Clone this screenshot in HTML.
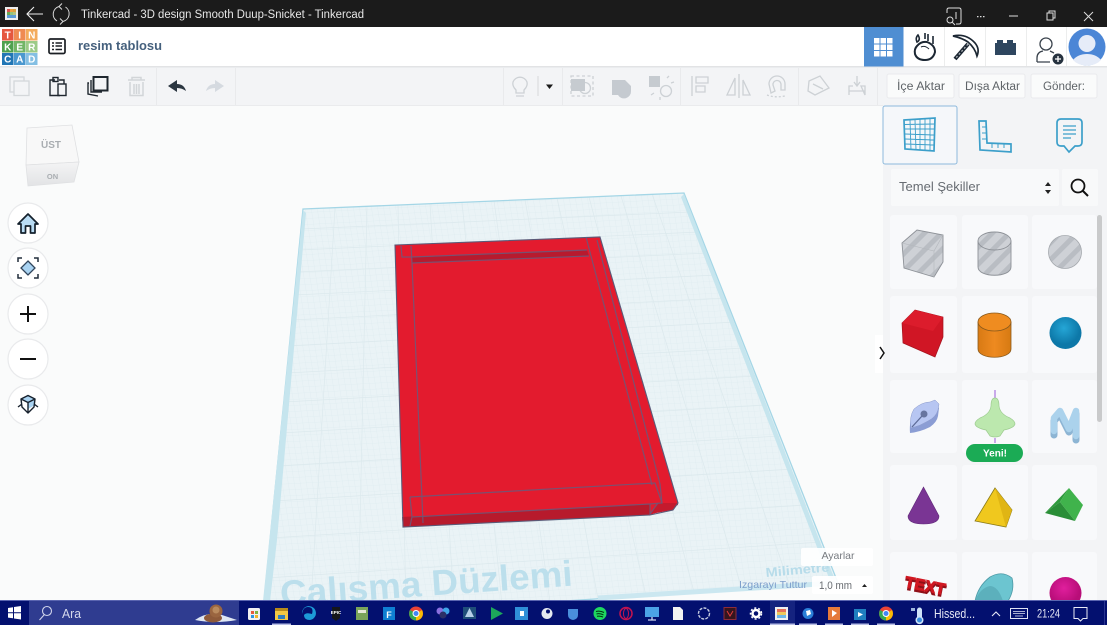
<!DOCTYPE html>
<html lang="tr"><head><meta charset="utf-8"><title>Tinkercad</title>
<style>html,body{margin:0;padding:0;background:#fafbfb;width:1107px;height:625px;overflow:hidden}svg{display:block;position:absolute;left:0;top:0}text{font-family:"Liberation Sans",sans-serif}</style></head>
<body>
<svg width="1107" height="625" viewBox="0 0 1107 625" xmlns="http://www.w3.org/2000/svg">
<defs>
<pattern id="fine" width="6" height="6" patternUnits="userSpaceOnUse" patternTransform="rotate(-3) skewX(6)"><path d="M6 0H0V6" fill="none" stroke="#d5e6eb" stroke-width=".4"/></pattern>
<pattern id="st" width="12" height="12" patternUnits="userSpaceOnUse" patternTransform="rotate(45)"><rect width="12" height="12" fill="#ced1d6"/><rect width="5" height="12" fill="#b9bdc3"/></pattern>
<linearGradient id="cyl" x1="0" x2="1"><stop offset="0" stop-color="#d87a14"/><stop offset=".5" stop-color="#ee8a20"/><stop offset="1" stop-color="#d67a12"/></linearGradient>
<linearGradient id="cube" x1="0" x2="0" y1="0" y2="1"><stop offset="0" stop-color="#f4f4f5"/><stop offset="1" stop-color="#e2e3e5"/></linearGradient>
<radialGradient id="blue" cx=".45" cy=".35"><stop offset="0" stop-color="#25a6d6"/><stop offset="1" stop-color="#0d78a8"/></radialGradient>
<radialGradient id="pink" cx=".45" cy=".35"><stop offset="0" stop-color="#e01f9d"/><stop offset="1" stop-color="#b80d78"/></radialGradient>
</defs>

<!-- work plane -->
<rect width="1107" height="625" fill="#fafbfb"/>
<polygon points="303,209 684,193 838,583 262,621" fill="#eaf3f6"/>
<polygon points="303,209 684,193 838,583 262,621" fill="url(#fine)"/>
<path d="M335 208L310 618M367 206L358 615M398 205L406 611M430 204L454 608M462 202L502 605M494 201L550 602M525 200L598 599M557 198L646 596M589 197L694 592M621 196L742 589M652 194L790 586M301 229L691 212M299 250L699 232M297 272L708 253M294 295L716 275M292 320L725 298M289 346L735 322M287 373L745 348M284 402L756 376M281 433L768 405M277 466L780 436M274 501L793 469M270 538L807 505M266 578L822 542" stroke="#dce9ed" stroke-width=".7" fill="none"/>
<polygon points="303,209 684,193 838,583 262,621" fill="none" stroke="#a4d6e6" stroke-width="1.300"/>
<polygon points="303,210 306,213 277,540 270,601 263,601" fill="#c6e5ee"/>
<polygon points="684,194 681,197 829,578 835,580" fill="#c6e5ee"/>
<path d="M598 598L835 583" stroke="#cbe7f0" stroke-width="5"/>
<text x="0" y="0" transform="translate(281,606) rotate(-4)" font-size="36" font-weight="700" fill="#bcdfec" textLength="293" lengthAdjust="spacingAndGlyphs">Çalışma Düzlemi</text>
<text transform="translate(766,577) rotate(-5)" font-size="13" font-weight="700" fill="#b7dcea" textLength="64" lengthAdjust="spacingAndGlyphs">Milimetre</text>

<!-- red box -->
<polygon points="395,245 600,237 678,503 678,505 650,515 403,527" fill="#e31b2e"/>
<polygon points="402,517 650,504 650,515 403,527" fill="#b71a2c"/>
<polygon points="650,514 658,503 678,503 673,510" fill="#c41a2d"/>
<polygon points="412,257 587,250 589,256 412,263" fill="#b81a2e"/>
<path d="M395 245L600 237L678 503L673 510L650 515L403 527L395 245Z" fill="none" stroke="#5b5a78" stroke-width="1.100"/>
<g fill="none" stroke="#6a5a7c" stroke-width="1.200" opacity=".85">
<path d="M412 257L587 250M412 263L589 256M401 246L402 257L412 257M411 246L412 263L423 523"/>
<path d="M586 237L591 256L652 485M597 240L660 484L662 503"/>
<path d="M410 497L655 483L662 503L650 504L412 517L410 526M410 497L412 517"/>
<path d="M650 504V514L658 503"/>
</g>

<!-- left controls -->
<polygon points="27,128 72,125 79,162 26,165" fill="#f8f8f8" stroke="#dfe0e2" stroke-width=".8"/>
<polygon points="26,165 79,162 74,182 28,186" fill="url(#cube)" stroke="#dfe0e2" stroke-width=".8"/>
<text x="51" y="148" font-size="10" font-weight="700" fill="#a9adb1" text-anchor="middle">ÜST</text>
<text x="52.500" y="179" font-size="7.500" font-weight="700" fill="#a9adb1" text-anchor="middle">ON</text>
<g fill="#fff" stroke="#e9eaec" stroke-width="1.200"><circle cx="28" cy="223" r="20"/><circle cx="28" cy="268" r="20"/><circle cx="28" cy="314" r="20"/><circle cx="28" cy="359" r="20"/><circle cx="28" cy="405" r="20"/></g>
<path d="M18 224L28 214L38 224H35V233H30.500V226H25.500V233H21V224Z" fill="#b9dcf4" stroke="#14202c" stroke-width="1.700" stroke-linejoin="round"/>
<path d="M28 261L35 268L28 275L21 268Z" fill="#a9d3f2" stroke="#31465c" stroke-width="1.300"/>
<path d="M18 262V258H22M34 258H38V262M38 274V278H34M22 278H18V274" fill="none" stroke="#222e3c" stroke-width="1.500"/>
<path d="M20 314H36M28 306V322" stroke="#111" stroke-width="2"/><path d="M20 359H36" stroke="#111" stroke-width="2"/>
<path d="M28 409V402L35 398.500V405ZM28 402L21 398.500L28 395L35 398.500Z" fill="#a9d3f2"/>
<path d="M21 399L28 395.500L35 399L34 407L28 413L22 407ZM21 399L28 402.500L35 399M28 402.500V413M18 407L22 404M38 407L34 404" fill="none" stroke="#18222e" stroke-width="1.400" stroke-linejoin="round"/>

<!-- right panel -->
<rect x="883" y="105" width="224" height="496" fill="#f3f4f6"/>
<rect x="883" y="106" width="74" height="58" rx="2" fill="#f5f7fa" stroke="#8db9dc"/>
<g fill="none" stroke="#3c9fca" stroke-width="1.700">
<path d="M904 120L935 118L934 151L905 149Z"/>
<path d="M904 124.500L935 124M904 129L935 129M905 134L934 135M905 139L934 140M905 144L934 145M910 120L911 150M915 120L916 150M920 119V150M925 119V151M930 119V151" stroke-width=".9"/>
<path d="M979 121H986L987 143L1011 144V152L980 150Z"/><path d="M986 127H982M986 133H982M986 139H982M992 144V148M998 144V148M1004 144V148" stroke-width="1"/>
<path d="M1061 119H1078Q1082 119 1082 123V142Q1082 146 1078 146H1075L1069 152L1064 146H1061Q1057 146 1057 142V123Q1057 119 1061 119Z"/>
<path d="M1063 126H1076M1063 130H1076M1063 134H1076M1063 138H1071" stroke-width="1.200"/>
</g>
<rect x="891" y="169" width="168" height="37" rx="2" fill="#f8f9fa"/><rect x="1062" y="169" width="36" height="37" rx="2" fill="#f8f9fa"/>
<text x="899" y="191" font-size="12.500" fill="#676c72" textLength="81" lengthAdjust="spacingAndGlyphs">Temel Şekiller</text>
<path d="M1045 186L1048 182L1051 186ZM1045 190L1048 194L1051 190Z" fill="#222"/>
<circle cx="1078" cy="186" r="6.500" fill="none" stroke="#111" stroke-width="1.800"/><path d="M1083 191L1088 196" stroke="#111" stroke-width="2"/>
<g fill="#f8f9fb">
<rect x="890" y="215" width="67" height="74" rx="3"/><rect x="962" y="215" width="66" height="74" rx="3"/><rect x="1032" y="215" width="65" height="74" rx="3"/>
<rect x="890" y="296" width="67" height="77" rx="3"/><rect x="962" y="296" width="66" height="77" rx="3"/><rect x="1032" y="296" width="65" height="77" rx="3"/>
<rect x="890" y="380" width="67" height="73" rx="3"/><rect x="962" y="380" width="66" height="73" rx="3"/><rect x="1032" y="380" width="65" height="73" rx="3"/>
<rect x="890" y="465" width="67" height="75" rx="3"/><rect x="962" y="465" width="66" height="75" rx="3"/><rect x="1032" y="465" width="65" height="75" rx="3"/>
<rect x="890" y="552" width="67" height="60" rx="3"/><rect x="962" y="552" width="66" height="60" rx="3"/><rect x="1032" y="552" width="65" height="60" rx="3"/>
</g>
<rect x="1097" y="215" width="5" height="207" rx="2.500" fill="#c9cacb"/>
<!-- shapes -->
<polygon points="902,243 917,230 943,235 943,262 934,277 904,268" fill="url(#st)" stroke="#8e9298" stroke-width=".9"/>
<path d="M902 243L934 251L943 235M934 251V277" fill="none" stroke="#b3b7bc" stroke-width=".6"/>
<path d="M978 241V267C978 278 1011 278 1011 267V241Z" fill="url(#st)" stroke="#8e9298" stroke-width=".9"/><ellipse cx="994.500" cy="241" rx="16.500" ry="9" fill="url(#st)" stroke="#8e9298" stroke-width=".9"/>
<circle cx="1065" cy="252" r="16.500" fill="url(#st)" stroke="#a5a9ae" stroke-width=".8"/>
<polygon points="902,323 915,310 943,317 943,337 935,357 903,343" fill="#d01625" stroke="#a5141f" stroke-width=".7"/><polygon points="902,323 915,310 943,317 933,331" fill="#dc1c2c"/>
<path d="M978 322V349C978 360 1011 360 1011 349V322Z" fill="url(#cyl)" stroke="#8a5a1c" stroke-width=".8"/><ellipse cx="994.500" cy="322" rx="16.500" ry="9" fill="#ef8c20" stroke="#8a5a1c" stroke-width=".8"/>
<circle cx="1065.500" cy="333" r="16" fill="url(#blue)"/>
<path d="M910 433Q909 420 914 412Q922 405 930 405L935 403L939 408L938 416Q937 422 930 427Q920 432 910 433Z" fill="#8b9dd4"/>
<path d="M911 428Q909 417 914 409Q922 402 930 402L935 400L939 404L938 410Q936 417 928 421Q920 426 911 428Z" fill="#b7c6f2" stroke="#8c9bcb" stroke-width=".5"/><path d="M912 427L922 416" stroke="#5c6a96" stroke-width="1.300"/><circle cx="924" cy="414" r="3.500" fill="#67759f"/>
<path d="M995 390V398" stroke="#c9a9ea" stroke-width="2"/><path d="M995 398Q991 398 991 406Q990 414 980 418Q975 421 975 424Q976 428 986 430L990 436Q995 438 1000 436L1004 430Q1014 428 1015 424Q1015 421 1010 418Q1000 414 999 406Q999 398 995 398Z" fill="#bce8ae" stroke="#9dcc90" stroke-width=".7"/><path d="M995 438V443" stroke="#c9a9ea" stroke-width="2"/>
<rect x="966" y="444" width="57" height="18" rx="9" fill="#1bab55"/><text x="995" y="456.500" font-size="10" font-weight="700" fill="#fff" text-anchor="middle">Yeni!</text>
<path d="M1054 435V421L1060 414L1069 432L1076 414V440" fill="none" stroke="#8db5d4" stroke-width="7" stroke-linejoin="round" stroke-linecap="round"/>
<path d="M1054 431V418L1060 411L1069 429L1076 411V436" fill="none" stroke="#abd2ec" stroke-width="6.500" stroke-linejoin="round" stroke-linecap="round"/>
<path d="M923.500 487L939 516Q939 524 923.500 524Q908 524 908 516Z" fill="#7a3594" stroke="#5f2878" stroke-width=".6"/>
<polygon points="995,488 975,521 1006,527 1012,510" fill="#f0c81e" stroke="#8a7a18" stroke-width=".8"/><polygon points="995,488 1006,527 1012,510" fill="#e0b514"/>
<polygon points="1069,488 1045,513 1060,502" fill="#2f9a3d"/><polygon points="1069,488 1083,505 1075,521 1060,502" fill="#40b34c"/><polygon points="1045,513 1060,502 1075,521" fill="#2a8e37"/>
<g font-size="16" font-weight="700" text-anchor="start"><text transform="translate(904,589) rotate(11)" fill="#8f1019" stroke="#8f1019" stroke-width="1.300" textLength="41" lengthAdjust="spacingAndGlyphs">TEXT</text><text transform="translate(904,587) rotate(11)" fill="#d01822" stroke="#d01822" stroke-width=".9" textLength="41" lengthAdjust="spacingAndGlyphs">TEXT</text></g>
<path d="M975 601Q978 586 990 577Q1002 570 1012 578Q1015 590 1008 601Z" fill="#6cc5d0" stroke="#4d99a5" stroke-width=".8"/><path d="M975 601Q980 588 990 586Q998 586 1003 601Z" fill="#5cb0bc"/>
<circle cx="1065.500" cy="593" r="16" fill="url(#pink)"/>
<rect x="875" y="335" width="8" height="38" fill="#fff"/><path d="M880 347L884 353L880 359" fill="none" stroke="#111" stroke-width="1.500"/>

<!-- settings -->
<rect x="801" y="548" width="72" height="18" rx="2" fill="#fff" opacity=".9"/><text x="838" y="559" font-size="10.500" fill="#777b80" text-anchor="middle">Ayarlar</text>
<text x="739" y="588" font-size="10.500" fill="#7d9ecb" textLength="68" lengthAdjust="spacingAndGlyphs">Izgarayı Tuttur</text>
<rect x="812" y="576" width="61" height="18" rx="2" fill="#fff" opacity=".92"/><text x="819" y="589" font-size="11" fill="#666a6f" textLength="33" lengthAdjust="spacingAndGlyphs">1,0 mm</text><path d="M862 587L864.500 584L867 587Z" fill="#222"/>

<!-- title bar -->
<rect width="1107" height="27" fill="#1b1b1b"/>
<rect x="5" y="7" width="13" height="13" fill="#eee"/><rect x="7" y="9" width="3" height="3" fill="#d9534f"/><rect x="10" y="9" width="3" height="3" fill="#f0a040"/><rect x="13" y="9" width="3" height="3" fill="#d9a040"/><rect x="7" y="12" width="3" height="3" fill="#6aa84f"/><rect x="10" y="12" width="3" height="3" fill="#93c47d"/><rect x="13" y="12" width="3" height="3" fill="#b6c47d"/><rect x="7" y="15" width="9" height="3" fill="#5b9bd5"/>
<path d="M43 14H27M34 7L27 14L34 21" fill="none" stroke="#eee" stroke-width="1.100"/>
<path d="M59 6.500A8 8 0 0 0 57 21M63 21.500A8 8 0 0 0 65.500 7M62 3.500L59 6.500L62 9.500M60 24.500L63 21.500L60 18.500" fill="none" stroke="#ddd" stroke-width="1"/>
<text x="81" y="18" font-size="11.500" fill="#e6e6e6" textLength="283" lengthAdjust="spacingAndGlyphs">Tinkercad - 3D design Smooth Duup-Snicket - Tinkercad</text>
<path d="M947 13V10Q947 8 949 8H959Q961 8 961 10V22Q961 24 959 24H956M956 12V19" fill="none" stroke="#ddd"/><circle cx="950" cy="20" r="3" fill="none" stroke="#ddd"/><path d="M952 22L955 25" stroke="#ddd"/>
<path d="M977 16h1.500v1.200h-1.500zM980 16h1.500v1.200h-1.500zM983 16h1.500v1.200h-1.500z" fill="#ddd"/>
<path d="M1009 16H1018" stroke="#ddd"/>
<rect x="1047" y="13" width="6" height="7" fill="none" stroke="#ddd"/><path d="M1049 13V11H1055V18H1053" fill="none" stroke="#ddd"/>
<path d="M1084 12L1093 21M1093 12L1084 21" stroke="#ddd"/>

<!-- header -->
<rect y="27" width="1107" height="40" fill="#fff"/><rect y="66" width="1107" height="1.500" fill="#e2e3e5"/>
<g font-size="10" font-weight="700" fill="#fff" text-anchor="middle">
<rect x="2" y="29" width="11.500" height="11.500" fill="#e5573f"/><text x="7.700" y="38.500">T</text>
<rect x="14" y="29" width="11.500" height="11.500" fill="#ef8a52"/><text x="19.700" y="38.500">I</text>
<rect x="26" y="29" width="11.500" height="11.500" fill="#f3ab5c"/><text x="31.700" y="38.500">N</text>
<rect x="2" y="41" width="11.500" height="11.500" fill="#4ea14f"/><text x="7.700" y="50.500">K</text>
<rect x="14" y="41" width="11.500" height="11.500" fill="#72b566"/><text x="19.700" y="50.500">E</text>
<rect x="26" y="41" width="11.500" height="11.500" fill="#9ccb87"/><text x="31.700" y="50.500">R</text>
<rect x="2" y="53" width="11.500" height="12" fill="#2176b5"/><text x="7.700" y="62.500">C</text>
<rect x="14" y="53" width="11.500" height="12" fill="#4b98cf"/><text x="19.700" y="62.500">A</text>
<rect x="26" y="53" width="11.500" height="12" fill="#84bfe3"/><text x="31.700" y="62.500">D</text>
</g>
<rect x="49" y="39" width="16" height="14.500" rx="1.500" fill="none" stroke="#1b1f24" stroke-width="1.700"/><path d="M52 43h2M52 46h2M52 49.500h2M55.500 43H62M55.500 46H62M55.500 49.500H62" stroke="#1b1f24" stroke-width="1.500"/>
<text x="78" y="50" font-size="12.500" font-weight="700" fill="#45607d" textLength="84" lengthAdjust="spacingAndGlyphs">resim tablosu</text>
<rect x="864" y="27" width="39.500" height="39.500" fill="#4f8ed2"/>
<g fill="#fff"><rect x="874" y="38" width="5.500" height="5.500"/><rect x="880.500" y="38" width="5.500" height="5.500"/><rect x="887" y="38" width="5.500" height="5.500"/><rect x="874" y="44.500" width="5.500" height="5.500"/><rect x="880.500" y="44.500" width="5.500" height="5.500"/><rect x="887" y="44.500" width="5.500" height="5.500"/><rect x="874" y="51" width="5.500" height="5.500"/><rect x="880.500" y="51" width="5.500" height="5.500"/><rect x="887" y="51" width="5.500" height="5.500"/></g>
<path d="M944.500 27V66M985.500 27V66M1026.500 27V66M1066.500 27V66" stroke="#eceded"/>
<path d="M917 46Q921 41 927 42Q935 45 935 52Q933 60 925 60Q917 60 915 54Q914 49 917 46Z" fill="none" stroke="#1c2733" stroke-width="2"/><path d="M921 47Q925 45 929 49" fill="none" stroke="#1c2733"/>
<path d="M925 33V39M928 34V41M933 36V44M918 35Q915 38 917 42Q921 40 918 35Z" fill="none" stroke="#1c2733" stroke-width="1.600"/>
<path d="M953 36Q966 33 975 43Q980 49 977 56Q975 48 968 42Q962 38 953 36Z" fill="#fff" stroke="#1c2733" stroke-width="1.700"/><path d="M968 44L955 59" stroke="#1c2733" stroke-width="4"/><path d="M968 44L955 59" stroke="#aab0b5" stroke-width="1.300" stroke-dasharray="2 2"/>
<path d="M995 43H997V40H1003V43H1007V40H1013V43H1016V55H995Z" fill="#2e465f"/>
<circle cx="1046" cy="44" r="6" fill="none" stroke="#39424c" stroke-width="1.300"/><path d="M1037 62V58Q1037 52 1043 51M1050 51Q1052 52 1054 53M1037 62H1050" fill="none" stroke="#39424c" stroke-width="1.300"/><circle cx="1058" cy="59" r="5.500" fill="#26323f"/><path d="M1055 59H1061M1058 56V62" stroke="#fff" stroke-width="1.300"/>
<circle cx="1087" cy="47" r="18.500" fill="#4b86d6"/><circle cx="1087" cy="43.500" r="8.500" fill="#e6ecf8"/><path d="M1073 60Q1078 54 1087 54Q1096 54 1101 60Q1096 65.500 1087 65.500Q1078 65.500 1073 60Z" fill="#e6ecf8"/>

<!-- toolbar -->
<rect y="67.500" width="1107" height="37.500" fill="#f3f4f6"/><rect y="105" width="883" height="1" fill="#eaebed"/>
<path d="M156.500 68V105M235.500 68V105M503.500 68V105M562.500 68V105M680.500 68V105M798.500 68V105M877.500 68V105" stroke="#e9eaec"/>
<g fill="none" stroke="#d4d7da" stroke-width="1.300"><rect x="10" y="77" width="14" height="15"/><rect x="14" y="81" width="15" height="14.500" fill="#f3f4f6"/></g>
<g fill="none" stroke="#1f272f" stroke-width="1.400"><path d="M55 80H50V95.500H60"/><path d="M59 80H64V84"/><rect x="53" y="77.500" width="5" height="4"/><rect x="58" y="84" width="8" height="11.500"/></g>
<g fill="none" stroke="#1f272f" stroke-width="1.400"><path d="M89 83H88V94L98 96"/><path d="M91 80V92H102"/></g><rect x="93.500" y="77" width="14" height="13.500" fill="#f3f4f6" stroke="#1f272f" stroke-width="2"/>
<g fill="none" stroke="#d2d5d8" stroke-width="1.500"><path d="M128 80H145M132 80V77.500H141V80M130 82V95.500H143V82M134 84V94M136.500 84V94M139 84V94"/></g>
<path d="M168 86L177 80V84Q184 84 186 91Q182 88 177 88V92Z" fill="#2b3641"/>
<path d="M224 86L215 80V84Q208 84 206 91Q210 88 215 88V92Z" fill="#d5dae0"/>
<g fill="none" stroke="#cdd1d5" stroke-width="1.300">
<path d="M516 90Q512 86 513 82A7.500 7.500 0 0 1 527 82Q528 86 524 90V93H516ZM516 96H524"/>
<path d="M538 76V96" stroke="#dedfe1"/>
<rect x="571" y="76" width="22" height="20" stroke-dasharray="3 2.500"/><circle cx="585" cy="88" r="5.500"/>
<path d="M667 78L669 76M671 83L674 82M654 93L651 95M660 97L660 100"/><circle cx="666" cy="91" r="5.500"/>
<path d="M692 76V96M696 77H708V83H696ZM696 86H705V92H696Z"/>
<path d="M739 74V98M735 78L727 95H735ZM743 80L750 95H743Z"/>
<path d="M769 84A8 8 0 0 1 785 84V90H781V84A3.500 3.500 0 0 0 773 85L775 91L771 93Z"/><path d="M767 95Q775 98 785 96" stroke-dasharray="2 2"/>
<path d="M809 81L820 76L829 88L815 95L808 91ZM813 84L823 89"/>
<path d="M849 95V86H853M861 86H865V95ZM857 76V85M854 82L857 86L860 82M849 91H865"/>
</g>
<path d="M546 84.500H553L549.500 89Z" fill="#1a1a1a"/>
<rect x="571" y="79" width="14" height="12" fill="#c6cbd0"/>
<path d="M612 80H625L631 86V91A7 7 0 0 1 618 95H612Z" fill="#c5cad0"/><rect x="649" y="76" width="11" height="11" fill="#c6cbd0"/>
<g fill="#fafbfb" stroke="#e9eaed"><rect x="887" y="74" width="67" height="24" rx="2"/><rect x="959" y="74" width="66" height="24" rx="2"/><rect x="1031" y="74" width="66" height="24" rx="2"/></g>
<g font-size="11.500" fill="#5f6468"><text x="897" y="90" textLength="48" lengthAdjust="spacingAndGlyphs">İçe Aktar</text><text x="965" y="90" textLength="55" lengthAdjust="spacingAndGlyphs">Dışa Aktar</text><text x="1043" y="90" textLength="42" lengthAdjust="spacingAndGlyphs">Gönder:</text></g>

<!-- taskbar -->
<rect y="600.500" width="1107" height="24.500" fill="#03106f"/>
<rect y="600" width="1107" height="1" fill="#5a65b0"/>
<rect x="29" y="601" width="210" height="24" fill="#2f3c90"/>
<path d="M8 608L13 607.300V612.300H8ZM14 607L21 606V612.300H14ZM8 613.300H13V618.300L8 617.600ZM14 613.300H21V619.500L14 618.500Z" fill="#fff"/>
<circle cx="47" cy="611" r="4.500" fill="none" stroke="#cfd3ea" stroke-width="1.100"/><path d="M44 615L39.500 620" stroke="#cfd3ea" stroke-width="1.100"/>
<text x="62" y="618" font-size="13" fill="#d5d8ec" textLength="19" lengthAdjust="spacingAndGlyphs">Ara</text>
<path d="M195 620Q208 611 222 615L237 620Q215 624 195 620Z" fill="#dfe7f3"/><ellipse cx="213" cy="618" rx="9" ry="4.500" fill="#8e5a3a"/><ellipse cx="216" cy="611" rx="6.500" ry="6.500" fill="#9a6540"/><circle cx="216" cy="610" r="3.500" fill="#b98a5e"/>
<!-- task icons -->
<rect x="248" y="608" width="12" height="12" rx="1.500" fill="#f0f0f2"/><rect x="251" y="611" width="3" height="3" fill="#e65b3c"/><rect x="255" y="611" width="3" height="3" fill="#7cb342"/><rect x="251" y="615" width="3" height="3" fill="#2e96e0"/><rect x="255" y="615" width="3" height="3" fill="#f0b429"/>
<rect x="275" y="608" width="13" height="12" fill="#f2c744"/><rect x="275" y="608" width="13" height="3" fill="#b78a1a"/><rect x="278" y="615" width="7" height="4" fill="#2f7dc1"/>
<path d="M302 614A7 7 0 1 1 310 620Q304 620 304 615Q306 612 312 614Q314 607 308 607Q303 607 302 614Z" fill="#1d9bd8"/>
<path d="M332 607H340V618L336 621L332 618Z" fill="#15161a"/><text x="336" y="614" font-size="4.500" font-weight="700" fill="#fff" text-anchor="middle">EPIC</text>
<rect x="356" y="607" width="12" height="13" fill="#7aa35a"/><rect x="358" y="610" width="8" height="3" fill="#e6e8d8"/>
<rect x="383" y="607" width="12" height="13" fill="#0f7fd2"/><text x="389" y="618" font-size="9" font-weight="700" fill="#fff" text-anchor="middle">F</text>
<circle cx="416" cy="613.500" r="7" fill="#ea4335"/><path d="M416 613.500L422 610A7 7 0 0 1 416 620.500Z" fill="#f9bc05"/><path d="M416 613.500V620.500A7 7 0 0 1 410 610Z" fill="#34a853"/><circle cx="416" cy="613.500" r="3" fill="#4285f4" stroke="#fff"/>
<circle cx="440" cy="611" r="3.500" fill="#8a6fe0"/><circle cx="446" cy="611" r="3.500" fill="#3fa4e8"/><circle cx="443" cy="615" r="3.500" fill="#2c2f66"/>
<rect x="463" y="607" width="13" height="12" fill="#1f4e79"/><path d="M469.500 608L474 617H465Z" fill="#b6d0e8"/>
<path d="M491 607L503 613.500L491 620Z" fill="#1da75b"/>
<rect x="515" y="607" width="13" height="13" fill="#2f8fd8"/><rect x="520" y="611" width="4" height="5" fill="#fff"/>
<circle cx="547" cy="613.500" r="5.500" fill="#e4e9f0"/><circle cx="548" cy="611.500" r="2" fill="#03106f"/>
<path d="M568 609H578V615Q578 619 573 620Q568 619 568 615Z" fill="#4a8fdc"/>
<circle cx="600" cy="613.500" r="6.500" fill="#1ed760"/><path d="M596 611.500Q600 610.500 604 612.500M596.500 614Q600 613 603.500 615M597 616.300Q600 615.700 603 617" fill="none" stroke="#03320f"/>
<circle cx="626" cy="613.500" r="6" fill="none" stroke="#c3134f" stroke-width="1.500"/><ellipse cx="626" cy="613.500" rx="2.500" ry="5" fill="none" stroke="#c3134f"/>
<rect x="645" y="607" width="14" height="10" fill="#4ca3e6"/><path d="M652 617V620M648 620H656" stroke="#d0d8f0" stroke-width="1.300"/>
<path d="M673 607H680L683 610V620H673Z" fill="#f2f2f2"/>
<circle cx="704" cy="613.500" r="5.500" fill="none" stroke="#c5cbe0" stroke-width="1.400" stroke-dasharray="3 1.200"/>
<rect x="724" y="607.500" width="12" height="12" fill="#35151e" stroke="#8e2c3a"/><path d="M727 611L730 616L733 611" fill="none" stroke="#e23b3b"/>
<circle cx="756" cy="613.500" r="3.500" fill="none" stroke="#fff" stroke-width="2.500"/><circle cx="756" cy="613.500" r="5.500" fill="none" stroke="#fff" stroke-width="1.500" stroke-dasharray="2 2"/>
<rect x="770" y="601" width="25" height="24" fill="#15237f"/><rect x="775" y="607" width="13" height="13" fill="#f0f0f0"/><rect x="777" y="609" width="9" height="3" fill="#e6705a"/><rect x="777" y="612" width="9" height="3" fill="#f0c85a"/><rect x="777" y="615" width="9" height="3" fill="#6fb7e8"/>
<circle cx="808" cy="613.500" r="5.500" fill="#2a7fd8"/><path d="M806 611L810 610L811 614L807 616Z" fill="#fff"/>
<rect x="828" y="607" width="12" height="13" fill="#e57a3a"/><path d="M832 610L837 613L832 617Z" fill="#fff"/>
<rect x="854" y="609" width="12" height="11" fill="#1f7fbf"/><path d="M858 612L863 614.500L858 617Z" fill="#fff"/>
<circle cx="886" cy="613.500" r="7" fill="#ea4335"/><path d="M886 613.500L892 610A7 7 0 0 1 886 620.500Z" fill="#f9bc05"/><path d="M886 613.500V620.500A7 7 0 0 1 880 610Z" fill="#34a853"/><circle cx="886" cy="613.500" r="3" fill="#4285f4" stroke="#fff"/>
<g fill="#b9bfe6"><rect x="770" y="623.500" width="25" height="1.500"/><rect x="799" y="623.500" width="18" height="1.500"/><rect x="825" y="623.500" width="18" height="1.500"/><rect x="851" y="623.500" width="18" height="1.500"/><rect x="877" y="623.500" width="18" height="1.500"/><rect x="272" y="623.500" width="19" height="1.500"/></g>
<path d="M917 610A2.500 2.500 0 0 1 922 610V617A4 4 0 1 1 917 617Z" fill="#cfe3f8"/><circle cx="919.500" cy="620" r="2.500" fill="#3a8fe0"/><rect x="911" y="608" width="4" height="3" fill="#9db5dc"/>
<text x="934" y="618" font-size="13" fill="#e8eaf6" textLength="41" lengthAdjust="spacingAndGlyphs">Hissed...</text>
<path d="M992 616L996 612L1000 616" fill="none" stroke="#e8eaf6" stroke-width="1.100"/>
<rect x="1010.500" y="608.500" width="17" height="10" fill="none" stroke="#dfe2f2"/><path d="M1013 611.500H1025M1013 613.500H1025M1015 616H1023" stroke="#dfe2f2" stroke-width=".8"/>
<text x="1037" y="617.500" font-size="11.500" fill="#e8eaf6" textLength="23" lengthAdjust="spacingAndGlyphs">21:24</text>
<path d="M1074 607.500H1087V618.500H1083L1080.500 621L1078 618.500H1074Z" fill="none" stroke="#e8eaf6"/>
<path d="M1104.500 601V625" stroke="#2a3590"/>
</svg>
</body></html>
